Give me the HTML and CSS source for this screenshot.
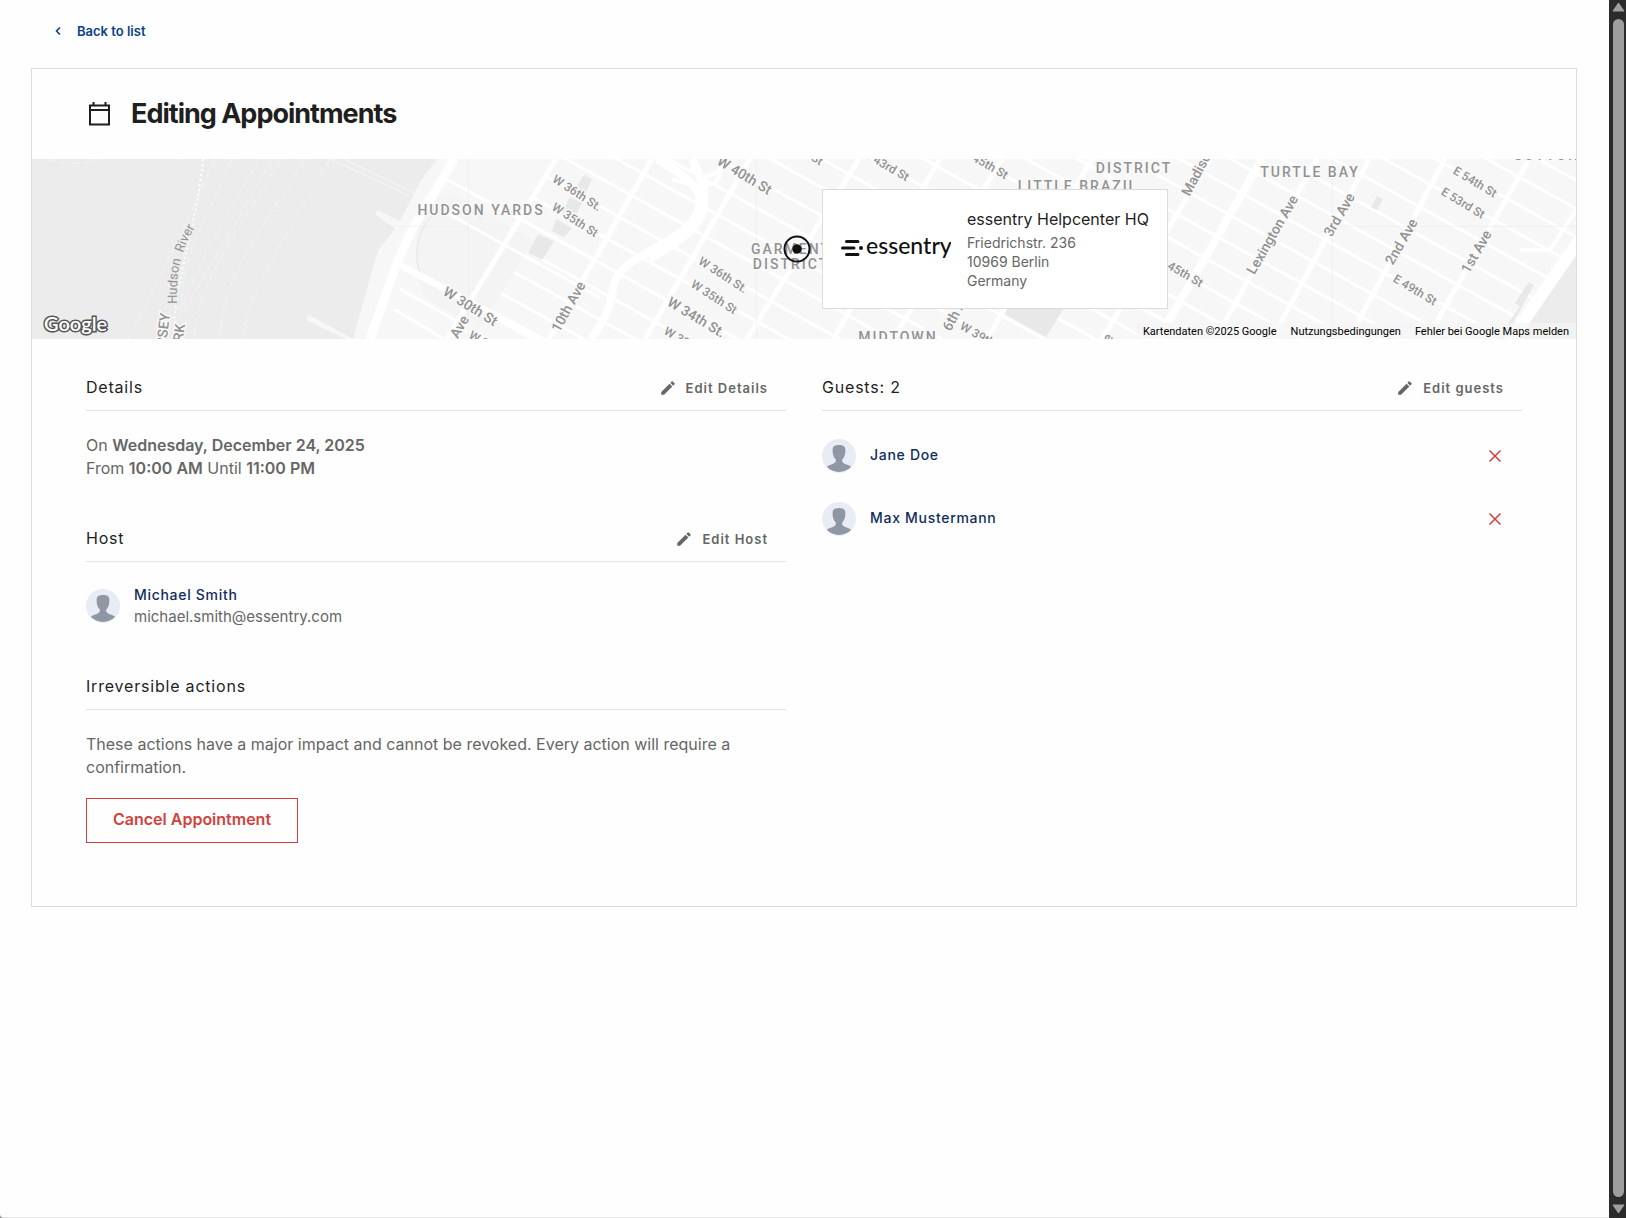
FILE: index.html
```html
<!DOCTYPE html>
<html lang="en">
<head>
    <meta charset="UTF-8">
    <meta name="viewport" content="width=device-width, initial-scale=1.0">
    <title>Editing Appointments</title>
    <link rel="stylesheet" href="styles.css">
</head>
<body>
    <!-- Shared icons -->
    <svg class="sprite" aria-hidden="true">
        <symbol id="pencil" viewBox="0 0 24 24">
            <path d="M3 17.25V21h3.75L17.81 9.94l-3.75-3.75L3 17.25zM20.71 7.04a1 1 0 0 0 0-1.41l-2.34-2.34a1 1 0 0 0-1.41 0l-1.83 1.83 3.75 3.75 1.83-1.83z" fill="currentColor"/>
        </symbol>
        <symbol id="cross" viewBox="0 0 20 20">
            <path d="M4.500 4.500l11 11M15.500 4.500l-11 11" fill="none" stroke="currentColor" stroke-width="1.500"/>
        </symbol>
        <symbol id="avatar" viewBox="0 0 34 34">
            <circle cx="17" cy="17" r="17" fill="#e9ecf4"/>
            <path d="M17 6c4.500 0 6.500 1.700 6.400 5 0 3.800-.6 7-3.200 9.500v2c1 2.600 6 2.800 9 5.300A17 17 0 0 1 4.800 27.800c3-2.500 8-2.700 9-5.300v-2c-2.600-2.500-3.200-5.700-3.200-9.500C10.500 7.700 12.500 6 17 6z" fill="#8f97a5"/>
        </symbol>
    </svg>

    <main class="page">
        <nav class="back">
            <a href="#">
                <svg width="8" height="10" viewBox="0 0 8 10"><path d="M6 1.500L2.500 5 6 8.500" fill="none" stroke="currentColor" stroke-width="1.600"/></svg>
                Back to list
            </a>
        </nav>

        <div class="card">
            <header class="title">
                <svg width="23" height="24" viewBox="0 0 23 24">
                    <path d="M2 3.500h19v19H2zM2 8h19M5.500 0v4M17.500 0v4" fill="none" stroke="#1f1f1f" stroke-width="2"/>
                </svg>
                <h1>Editing Appointments</h1>
            </header>

            <div class="map">
                <svg class="tiles" viewBox="0 0 1544 180" preserveAspectRatio="xMidYMid slice">
                    <defs>
                        <pattern id="streets" width="100" height="24.800" y="-246.400" patternUnits="userSpaceOnUse" patternTransform="rotate(29)">
                            <path d="M0 12.400h100" stroke="#fff" stroke-width="3"/>
                        </pattern>
                        <path id="river" d="M145 145C144 108 148 90 174 50"/>
                    </defs>
                    <rect width="1544" height="180" fill="#ececec"/>

                    <!-- Hudson river ferry lines -->
                    <g fill="none" stroke="#f5f5f5" stroke-dasharray="8 4">
                        <path d="M183 0C160 50 140 95 96 180M200 0C175 60 150 90 149 150M227 0C200 50 160 110 147 160M240 0C210 55 175 110 150 155M248 0C215 60 165 120 162 180M272 0C240 60 190 110 188 180M298 0C260 70 215 130 211 180M16 0C30 6 50 6 68 0"/>
                    </g>
                    <path d="M171 0C165 60 152 90 142 160" fill="none" stroke="#fff" stroke-width="2" stroke-dasharray="2 3"/>
                    <path d="M298 0l80 37M312 0l70 34" stroke="#f7f7f7"/>

                    <!-- Manhattan -->
                    <path d="M405 0L388 23 368 62l-22-11-3 4 20 15-16 20-6 18-6 22-14 50-44-24-3 5 40 19H1475L1544 90V0z" fill="#f7f7f7"/>
                    <path d="M518 8L441 134 415 180H1480L1544 80V0H524z" fill="url(#streets)"/>
                    <path d="M384 82c0-25 10-44 40-46l78 46-55 88-55-32c-6-15-8-30-8-56z" fill="#f4f4f4"/>
                    <path d="M450 60c-18-16-58-20-65 30-1 22 4 28 14 34l115 56" fill="none" stroke="#e6e6e6"/>
                    <g fill="#e8e8e8">
                        <path d="M506 75l16 7-12 19-14-7zM524 60l16 9-8 9-12-6zM538 38l12 6-9 18-12-6zM552 16l8 4-8 18-10-6z"/>
                        <path d="M968 144l64 5-18 29-40-22zM1345 37l6 3-6 11-6-3z"/>
                        <path d="M1497 123l5 3-30 54h-6l22-33-5-3z"/>
                    </g>
                    <path d="M1490 180l54-80v80z" fill="#ececec"/>

                    <g fill="none" stroke="#fff">
                        <path d="M422 0C400 40 380 65 365 104L338 180" stroke-width="9"/>
                        <path d="M368 106l147 78" stroke-width="7"/>
                        <path d="M414 20l160 87M408 50l160 89M368 130l60 34M362 150l50 30" stroke-width="3"/>
                        <path d="M524 0L415 180M620 0L517 180M718 0L613 180M827 0L715 180M908 0L801 180M970 0L861 180M1060 0L955 180M1178 0L1070 180M1285 0L1183 180M1337 0L1240 180M1413 0L1317 180M1497 0L1395 180" stroke-width="5"/>
                        <path d="M1230 0L1168 108 1126 180" stroke-width="8"/>
                        <path d="M625 0c30 18 50 30 40 55-20 35-80 40-84 75-2 20-12 35-22 50M660 0c10 18 18 40 8 60-10 16-30 28-50 40" stroke-width="8"/>
                        <path d="M690 0c0 18-20 22-32 10M640 20c25 10 50 10 48-10M1544 51l-26 40h-30" stroke-width="4"/>
                        <path d="M1548 80L1478 182" stroke-width="12"/>
                    </g>
                    <path d="M148.500 0v67M148 67.500h288.500M436.500 0v180M724.500 0v180M1300.500 0v180M1300 67.500h244" stroke="#e9e9e9" stroke-opacity=".5" fill="none"/>

                    <g class="street">
                        <text class="river"><textPath href="#river">Hudson &#160;River</textPath></text>
                        <text transform="translate(545 34) rotate(33)" text-anchor="middle" dy="4">W 36th St.</text>
                        <text transform="translate(543 61) rotate(33)" text-anchor="middle" dy="4">W 35th St</text>
                        <text transform="translate(691 116) rotate(33)" text-anchor="middle" dy="4">W 36th St.</text>
                        <text transform="translate(682 138) rotate(33)" text-anchor="middle" dy="4">W 35th St</text>
                        <text transform="translate(633 171) rotate(30)" dy="4">W 33rd St</text>
                        <text transform="translate(438 175) rotate(30)" dy="4">W 29th St</text>
                        <text transform="translate(790 3) rotate(30)" text-anchor="end" dy="4">W 42nd St</text>
                        <text transform="translate(876 19) rotate(30)" text-anchor="end" dy="4">W 43rd St</text>
                        <text transform="translate(975 17) rotate(30)" text-anchor="end" dy="4">W 45th St</text>
                        <text transform="translate(929 166) rotate(30)" dy="4">W 39th St</text>
                        <text transform="translate(1170 125) rotate(30)" text-anchor="end" dy="4">W 45th St</text>
                        <text transform="translate(1443 23) rotate(31)" text-anchor="middle" dy="4">E 54th St</text>
                        <text transform="translate(1431 44) rotate(31)" text-anchor="middle" dy="4">E 53rd St</text>
                        <text transform="translate(1383 131) rotate(31)" text-anchor="middle" dy="4">E 49th St</text>
                    </g>
                    <g class="avenue">
                        <text transform="translate(438 148) rotate(32)" text-anchor="middle" dy="4">W 30th St</text>
                        <text transform="translate(664 159) rotate(31)" text-anchor="middle" dy="4">W 34th St.</text>
                        <text transform="translate(712 17) rotate(31)" text-anchor="middle" dy="4">W 40th St</text>
                        <text transform="translate(434 158) rotate(-60)" text-anchor="end" dy="4">11th Ave</text>
                        <text transform="translate(537 148) rotate(-61)" text-anchor="middle" dy="4">10th Ave</text>
                        <text transform="translate(915 171) rotate(-62)" dy="4">6th Ave</text>
                        <text transform="translate(1078 176) rotate(-62)" text-anchor="end" dy="4">5th Ave</text>
                        <text transform="translate(1154 36) rotate(-62)" dy="4">Madison Ave</text>
                        <text transform="translate(1241 76) rotate(-60)" text-anchor="middle" dy="4">Lexington Ave</text>
                        <text transform="translate(1308 56) rotate(-60)" text-anchor="middle" dy="4">3rd Ave</text>
                        <text transform="translate(1370 83) rotate(-60)" text-anchor="middle" dy="4">2nd Ave</text>
                        <text transform="translate(1445 93) rotate(-60)" text-anchor="middle" dy="4">1st Ave</text>
                        <text transform="translate(134 154) rotate(-83)" text-anchor="end" dy="4">NEW JERSEY</text>
                        <text transform="translate(149 165) rotate(-83)" text-anchor="end" dy="4">NEW YORK</text>
                    </g>
                    <g class="district" text-anchor="middle">
                        <text x="449" y="56">HUDSON YARDS</text>
                        <text x="759" y="95">GARMENT</text>
                        <text x="759" y="110">DISTRICT</text>
                        <text x="1102" y="0">DIAMOND</text>
                        <text x="1102" y="14">DISTRICT</text>
                        <text x="1046" y="32">LITTLE BRAZIL</text>
                        <text x="866" y="183">MIDTOWN</text>
                        <text x="1278" y="18">TURTLE BAY</text>
                        <text x="1544" y="1">SUTTON PLACE</text>
                    </g>
                </svg>

                <svg class="google" width="70" height="28" viewBox="0 0 70 28">
                    <text x="4" y="20">Google</text>
                </svg>

                <svg class="marker" width="28" height="28" viewBox="0 0 28 28">
                    <circle cx="14" cy="14" r="12.500" fill="none" stroke="#111" stroke-width="2"/>
                    <circle cx="14" cy="14" r="4.700" fill="#111"/>
                </svg>

                <div class="location">
                    <svg class="logo" width="110" height="24" viewBox="0 0 110 24">
                        <path d="M5.500 4.500h11.500M1.500 11h11.500M5.500 17.500h11.500" stroke="#111" stroke-width="3" stroke-linecap="round"/>
                        <circle cx="20" cy="11" r="2" fill="#111"/>
                        <text x="25" y="17">essentry</text>
                    </svg>
                    <div class="place">
                        <h2>essentry Helpcenter HQ</h2>
                        <address>Friedrichstr. 236<br>10969 Berlin<br>Germany</address>
                    </div>
                </div>

                <div class="attribution">
                    <span>Kartendaten ©2025 Google</span>
                    <a href="#">Nutzungsbedingungen</a>
                    <a href="#">Fehler bei Google Maps melden</a>
                </div>
            </div>

            <div class="columns">
                <div>
                    <section>
                        <div class="section-head">
                            <h3>Details</h3>
                            <button type="button" class="edit"><svg width="18" height="18"><use href="#pencil"/></svg>Edit Details</button>
                        </div>
                        <p>On <b>Wednesday, December 24, 2025</b><br>From <b>10:00 AM</b> Until <b>11:00 PM</b></p>
                    </section>

                    <section>
                        <div class="section-head">
                            <h3>Host</h3>
                            <button type="button" class="edit"><svg width="18" height="18"><use href="#pencil"/></svg>Edit Host</button>
                        </div>
                        <div class="host">
                            <svg width="34" height="34"><use href="#avatar"/></svg>
                            <div>
                                <div class="name">Michael Smith</div>
                                <div class="email">michael.smith@essentry.com</div>
                            </div>
                        </div>
                    </section>

                    <section>
                        <div class="section-head">
                            <h3>Irreversible actions</h3>
                        </div>
                        <p>These actions have a major impact and cannot be revoked. Every action will require a confirmation.</p>
                        <button type="button" class="cancel">Cancel Appointment</button>
                    </section>
                </div>

                <section>
                    <div class="section-head">
                        <h3>Guests: 2</h3>
                        <button type="button" class="edit"><svg width="18" height="18"><use href="#pencil"/></svg>Edit guests</button>
                    </div>
                    <ul class="guests">
                        <li>
                            <svg width="34" height="34"><use href="#avatar"/></svg>
                            <span class="name">Jane Doe</span>
                            <button type="button" class="remove" aria-label="Remove Jane Doe"><svg width="20" height="20"><use href="#cross"/></svg></button>
                        </li>
                        <li>
                            <svg width="34" height="34"><use href="#avatar"/></svg>
                            <span class="name">Max Mustermann</span>
                            <button type="button" class="remove" aria-label="Remove Max Mustermann"><svg width="20" height="20"><use href="#cross"/></svg></button>
                        </li>
                    </ul>
                </section>
            </div>
        </div>
    </main>

    <div class="scrollbar" aria-hidden="true">
        <svg width="13" height="10" viewBox="0 0 13 10"><path d="M6.500 1L12 9H1z" fill="#9e9e9e" stroke="#9e9e9e" stroke-linejoin="round"/></svg>
        <div class="thumb"></div>
        <svg width="13" height="10" viewBox="0 0 13 10"><path d="M6.500 9L12 1H1z" fill="#9e9e9e" stroke="#9e9e9e" stroke-linejoin="round"/></svg>
    </div>
</body>
</html>
```

FILE: styles.css
```css
* {
    box-sizing: border-box;
}
html {
    background-color: #8a8a8a;
}
body {
    margin: 0;
    display: flex;
    min-height: 100vh;
    font-family: Inter, sans-serif;
    font-size: 16px;
    line-height: 23px;
    color: #666;
}
svg {
    display: block;
    flex: none;
}
h1, h2, h3, p, ul {
    margin: 0;
    padding: 0;
}
b {
    font-weight: 600;
}
button {
    font-family: inherit;
    background: none;
    border: none;
    padding: 0;
    cursor: pointer;
}
.sprite {
    position: absolute;
    width: 0;
    height: 0;
}

.page {
    flex: 1;
    padding: 0 32px 0 31px;
    background-color: #fefefe;
    border-bottom: 1px solid #e4e4e4;
    border-bottom-left-radius: 4px;
}
.back {
    height: 68px;
    padding: 19px 23px;
}
.back a {
    display: inline-flex;
    align-items: center;
    gap: 15px;
    font-size: 13px;
    font-weight: 600;
    color: #0b4286;
    text-decoration: none;
}

.card {
    border: 1px solid #dcdcdc;
}
.title {
    display: flex;
    align-items: center;
    gap: 20px;
    height: 90px;
    padding: 0 56px;
}
h1 {
    font-size: 27px;
    line-height: 36px;
    font-weight: 700;
    letter-spacing: -1px;
    color: #1f1f1f;
}

/* Map */
.map {
    position: relative;
    height: 180px;
    overflow: hidden;
}
.tiles {
    width: 100%;
    height: 100%;
}
.tiles text {
    font-family: Roboto, sans-serif;
    font-weight: 500;
    fill: #929292;
    stroke: #f9f9f9;
    stroke-width: 3px;
    paint-order: stroke;
}
.street {
    font-size: 12px;
}
.tiles .river {
    font-size: 13px;
    font-weight: 400;
    stroke: #ececec;
}
.avenue {
    font-size: 14px;
}
.district {
    font-size: 14px;
    letter-spacing: 2px;
}
.google {
    position: absolute;
    left: 8px;
    bottom: 0;
}
.google text {
    font-family: Lato, sans-serif;
    font-size: 20px;
    font-weight: 600;
    fill: #fff;
    stroke: #555;
    stroke-width: 3px;
    paint-order: stroke;
}
.marker {
    position: absolute;
    top: 76px;
    left: calc(50% - 21px);
}
.location {
    position: absolute;
    top: 30px;
    left: calc(50% + 18px);
    display: flex;
    align-items: center;
    gap: 16px;
    height: 120px;
    padding: 0 18px;
    background-color: #fff;
    border: 1px solid #dcdcdc;
}
.logo text {
    font-family: Lato, sans-serif;
    font-size: 23px;
    font-weight: 500;
    fill: #111;
}
.place {
    padding-bottom: 2px;
}
h2 {
    margin-bottom: 2px;
    font-size: 16px;
    line-height: 24px;
    font-weight: 400;
    color: #1f1f1f;
}
address {
    font-size: 14px;
    line-height: 19px;
    font-style: normal;
}
.attribution {
    position: absolute;
    right: 0;
    bottom: 0;
    display: flex;
    gap: 14px;
    padding: 1px 7px 0;
    background-color: rgba(245, 245, 245, 0.7);
    font-family: Roboto, sans-serif;
    font-size: 11px;
    line-height: 15px;
    color: #000;
}
.attribution a {
    color: #000;
    text-decoration: none;
}

/* Appointment data */
.columns {
    display: grid;
    grid-template-columns: 1fr 1fr;
    gap: 36px;
    padding: 26px 54px 63px;
}
section + section {
    margin-top: 36px;
}
.section-head {
    display: flex;
    justify-content: space-between;
    align-items: center;
    height: 46px;
    padding-right: 18px;
    border-bottom: 1px solid #e4e4e4;
}
h3 {
    font-size: 16px;
    font-weight: 400;
    letter-spacing: 0.05em;
    color: #1f1f1f;
}
.edit {
    display: flex;
    align-items: center;
    gap: 9px;
    font-size: 13px;
    font-weight: 600;
    letter-spacing: 1px;
    color: #666;
}
p {
    padding-top: 23px;
}
.host {
    display: flex;
    align-items: center;
    gap: 14px;
    padding-top: 22px;
    line-height: 22px;
}
.name {
    font-size: 14px;
    font-weight: 500;
    letter-spacing: 0.05em;
    color: #0f2d5c;
}
.email {
    font-size: 15px;
}
.cancel {
    margin-top: 19px;
    height: 45px;
    padding: 0 26px 3px;
    border: 1px solid #d63c3c;
    font-size: 16px;
    font-weight: 600;
    color: #d0433c;
}
.guests {
    padding-top: 13px;
    list-style: none;
}
.guests li {
    display: flex;
    align-items: center;
    gap: 14px;
    height: 63px;
    padding-right: 17px;
}
.guests .name {
    padding-bottom: 2px;
}
.remove {
    margin-left: auto;
    color: #d63c3c;
}

.scrollbar {
    display: flex;
    flex-direction: column;
    align-items: center;
    gap: 7px;
    width: 17px;
    padding: 2px 0 4px 1px;
    background-color: #2b2b2b;
}
.thumb {
    flex: 1;
    width: 11px;
    border-radius: 6px;
    background-color: #9e9e9e;
}
```
